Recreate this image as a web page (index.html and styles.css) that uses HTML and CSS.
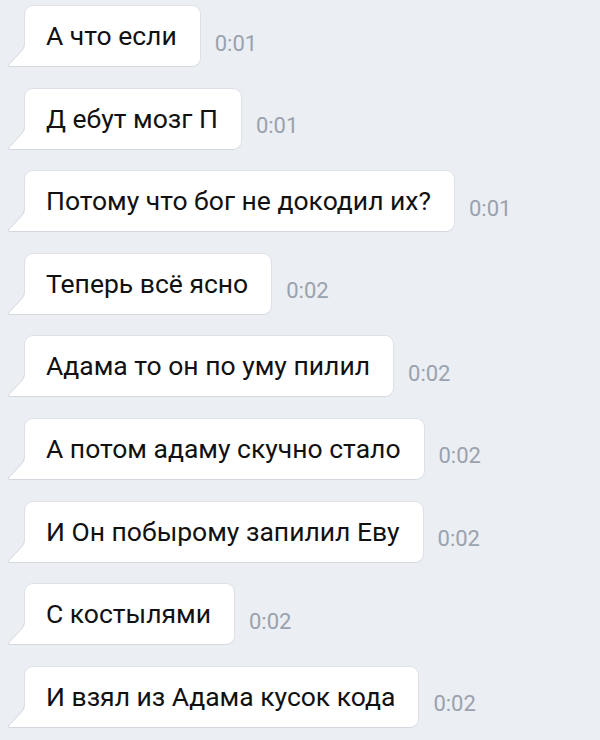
FILE: index.html
```html
<!DOCTYPE html>
<html lang="ru">
<head>
    <meta charset="UTF-8">
    <title>Диалог</title>
    <meta name="viewport" content="width=device-width, initial-scale=1.0">
    <link rel="stylesheet" href="styles.css">
</head>
<body>
    <div class="chat">
        <div class="msg">
            <div class="bubble">А что если<svg class="tail" viewBox="0 0 19 23"><path class="tail-fill" d="M17.5 0 Q17.5 4 14 7.5 L1.5 21 Q1 22.5 3 22.5 H19 V0 Z"/><path class="tail-line" d="M17.5 0 Q17.5 4 14 7.5 L1.5 21 Q1 22.5 3 22.5 H19"/></svg></div>
            <span class="time">0:01</span>
        </div>
        <div class="msg">
            <div class="bubble">Д ебут мозг П<svg class="tail" viewBox="0 0 19 23"><path class="tail-fill" d="M17.5 0 Q17.5 4 14 7.5 L1.5 21 Q1 22.5 3 22.5 H19 V0 Z"/><path class="tail-line" d="M17.5 0 Q17.5 4 14 7.5 L1.5 21 Q1 22.5 3 22.5 H19"/></svg></div>
            <span class="time">0:01</span>
        </div>
        <div class="msg">
            <div class="bubble">Потому что бог не докодил их?<svg class="tail" viewBox="0 0 19 23"><path class="tail-fill" d="M17.5 0 Q17.5 4 14 7.5 L1.5 21 Q1 22.5 3 22.5 H19 V0 Z"/><path class="tail-line" d="M17.5 0 Q17.5 4 14 7.5 L1.5 21 Q1 22.5 3 22.5 H19"/></svg></div>
            <span class="time">0:01</span>
        </div>
        <div class="msg">
            <div class="bubble">Теперь всё ясно<svg class="tail" viewBox="0 0 19 23"><path class="tail-fill" d="M17.5 0 Q17.5 4 14 7.5 L1.5 21 Q1 22.5 3 22.5 H19 V0 Z"/><path class="tail-line" d="M17.5 0 Q17.5 4 14 7.5 L1.5 21 Q1 22.5 3 22.5 H19"/></svg></div>
            <span class="time">0:02</span>
        </div>
        <div class="msg">
            <div class="bubble">Адама то он по уму пилил<svg class="tail" viewBox="0 0 19 23"><path class="tail-fill" d="M17.5 0 Q17.5 4 14 7.5 L1.5 21 Q1 22.5 3 22.5 H19 V0 Z"/><path class="tail-line" d="M17.5 0 Q17.5 4 14 7.5 L1.5 21 Q1 22.5 3 22.5 H19"/></svg></div>
            <span class="time">0:02</span>
        </div>
        <div class="msg">
            <div class="bubble">А потом адаму скучно стало<svg class="tail" viewBox="0 0 19 23"><path class="tail-fill" d="M17.5 0 Q17.5 4 14 7.5 L1.5 21 Q1 22.5 3 22.5 H19 V0 Z"/><path class="tail-line" d="M17.5 0 Q17.5 4 14 7.5 L1.5 21 Q1 22.5 3 22.5 H19"/></svg></div>
            <span class="time">0:02</span>
        </div>
        <div class="msg">
            <div class="bubble">И Он побырому запилил Еву<svg class="tail" viewBox="0 0 19 23"><path class="tail-fill" d="M17.5 0 Q17.5 4 14 7.5 L1.5 21 Q1 22.5 3 22.5 H19 V0 Z"/><path class="tail-line" d="M17.5 0 Q17.5 4 14 7.5 L1.5 21 Q1 22.5 3 22.5 H19"/></svg></div>
            <span class="time">0:02</span>
        </div>
        <div class="msg">
            <div class="bubble">С костылями<svg class="tail" viewBox="0 0 19 23"><path class="tail-fill" d="M17.5 0 Q17.5 4 14 7.5 L1.5 21 Q1 22.5 3 22.5 H19 V0 Z"/><path class="tail-line" d="M17.5 0 Q17.5 4 14 7.5 L1.5 21 Q1 22.5 3 22.5 H19"/></svg></div>
            <span class="time">0:02</span>
        </div>
        <div class="msg">
            <div class="bubble">И взял из Адама кусок кода<svg class="tail" viewBox="0 0 19 23"><path class="tail-fill" d="M17.5 0 Q17.5 4 14 7.5 L1.5 21 Q1 22.5 3 22.5 H19 V0 Z"/><path class="tail-line" d="M17.5 0 Q17.5 4 14 7.5 L1.5 21 Q1 22.5 3 22.5 H19"/></svg></div>
            <span class="time">0:02</span>
        </div>
    </div>
</body>
</html>
```

FILE: styles.css
```css
/* Reset */
* {
    margin: 0;
    padding: 0;
    box-sizing: border-box;
}
body {
    font-family: Roboto, 'Noto Sans', sans-serif;
    background: #ebeef3;
    height: 740px;
    overflow: hidden;
}
.chat {
    display: flex;
    flex-direction: column;
    gap: 20.6px;
    padding: 5px 0 0 24px;
}
.msg {
    display: flex;
    align-items: center;
}
.bubble {
    position: relative;
    display: flex;
    align-items: center;
    height: 62px;
    padding: 0 23px 1px 21px;
    background: #fff;
    border: 1px solid #dde1e7;
    border-bottom-color: #d3d8df;
    border-radius: 9px 9px 9px 0;
    font-size: 26.5px;
    color: #111;
    white-space: nowrap;
}
.tail {
    position: absolute;
    left: -18px;
    bottom: -1px;
    width: 19px;
    height: 23px;
    overflow: visible;
}
.tail-fill {
    fill: #fff;
}
.tail-line {
    fill: none;
    stroke: #d3d8df;
    stroke-width: 1;
}
.time {
    margin: 14px 0 0 14px;
    font-size: 22px;
    color: #9aa2ad;
}
```
